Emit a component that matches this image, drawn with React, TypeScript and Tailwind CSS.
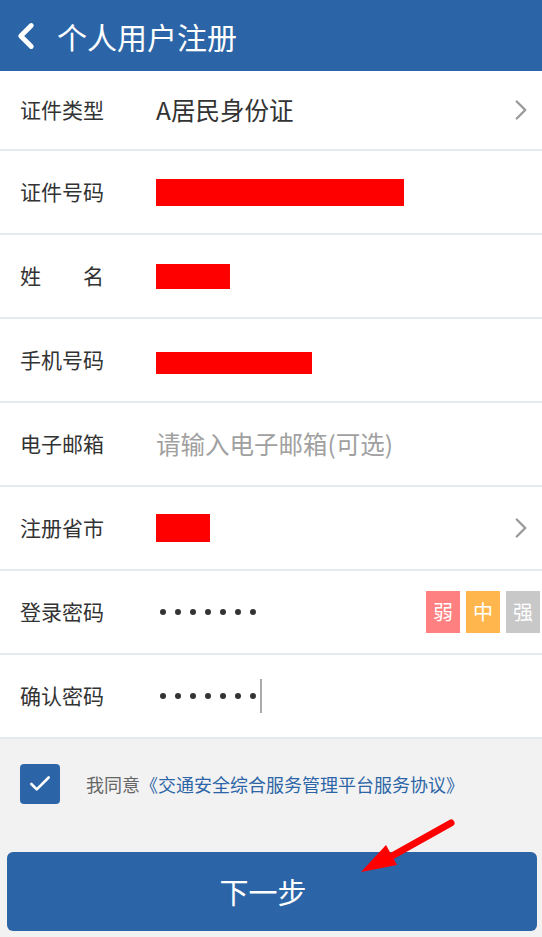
import { ChevronLeft, ChevronRight, Check } from "lucide-react";

const FONT = { fontFamily: '"Noto Sans CJK SC", "Noto Sans", sans-serif' };

function Row({ label, first, children, arrow }: { label: React.ReactNode; first?: boolean; children?: React.ReactNode; arrow?: boolean }) {
  return (
    <div className={`flex items-center border-b-2 border-[#e4e9ed] bg-white ${first ? "h-[80px]" : "h-[84px]"}`}>
      <div className="w-[156px] shrink-0 pl-[20px] text-[21px] text-[#333]">{label}</div>
      <div className="flex flex-1 items-center h-full">{children}</div>
      {arrow && <ChevronRight className="mr-[4px] h-[34px] w-[34px] text-[#9a9a9a]" strokeWidth={1.7} />}
    </div>
  );
}

function Redact({ w, h, offset = 0 }: { w: number; h: number; offset?: number }) {
  return <div className="bg-[#ff0000]" style={{ width: w, height: h, marginTop: offset }} />;
}

function Dots() {
  return (
    <div className="flex items-center gap-[9px] pl-[4px]">
      {[0, 1, 2, 3, 4, 5, 6].map((i) => (
        <span key={i} className="h-[6px] w-[6px] rounded-full bg-[#333]" />
      ))}
    </div>
  );
}

export default function App() {
  return (
    <div className="relative w-[542px] h-[937px] bg-[#f2f2f2] overflow-hidden" style={FONT}>
      <div className="flex h-[71px] items-center bg-[#2c65a7] text-white">
        <ChevronLeft className="ml-[5px] h-[42px] w-[42px]" strokeWidth={2.8} />
        <span className="ml-[10px] text-[30px] leading-none">个人用户注册</span>
      </div>

      <Row label="证件类型" first arrow>
        <span className="text-[24.5px] text-[#333]">A居民身份证</span>
      </Row>
      <Row label="证件号码">
        <Redact w={248} h={27} />
      </Row>
      <Row label="姓　　名">
        <Redact w={74} h={25} />
      </Row>
      <Row label="手机号码">
        <Redact w={156} h={22} offset={6} />
      </Row>
      <Row label="电子邮箱">
        <span className="text-[24.5px] text-[#a0a0a0]">请输入电子邮箱(可选)</span>
      </Row>
      <Row label="注册省市" arrow>
        <Redact w={54} h={28} />
      </Row>
      <Row label="登录密码">
        <div className="flex-1">
          <Dots />
        </div>
        <div className="flex gap-[6px] pr-[2px] text-[20px] text-white">
          <span className="flex h-[42px] w-[34px] items-center justify-center bg-[#ff8080]">弱</span>
          <span className="flex h-[42px] w-[34px] items-center justify-center bg-[#ffb74d]">中</span>
          <span className="flex h-[42px] w-[34px] items-center justify-center bg-[#c8c8c8]">强</span>
        </div>
      </Row>
      <Row label="确认密码">
        <Dots />
        <span className="ml-[4px] h-[34px] w-[2px] bg-[#aaa]" />
      </Row>

      <div className="flex items-center pl-[20px] pt-[25px]">
        <div className="flex h-[40px] w-[40px] items-center justify-center rounded-[4px] bg-[#2c65a7]">
          <Check className="h-[26px] w-[26px] text-white" strokeWidth={2.4} />
        </div>
        <span className="ml-[26px] text-[18px] text-[#666]">
          我同意<span className="text-[#2c65a7]">《交通安全综合服务管理平台服务协议》</span>
        </span>
      </div>

      <button className="mx-[7px] mt-[48px] flex h-[79px] w-[530px] items-center justify-center rounded-[6px] bg-[#2c65a7] pr-[18px] text-[29px] text-white">
        下一步
      </button>

      <svg className="absolute left-0 top-0" width="542" height="937" viewBox="0 0 542 937">
        <line x1="451" y1="823" x2="392" y2="856" stroke="#ff0000" strokeWidth="7" strokeLinecap="round" />
        <polygon points="361,872 386,845 397,865" fill="#ff0000" />
      </svg>
    </div>
  );
}
